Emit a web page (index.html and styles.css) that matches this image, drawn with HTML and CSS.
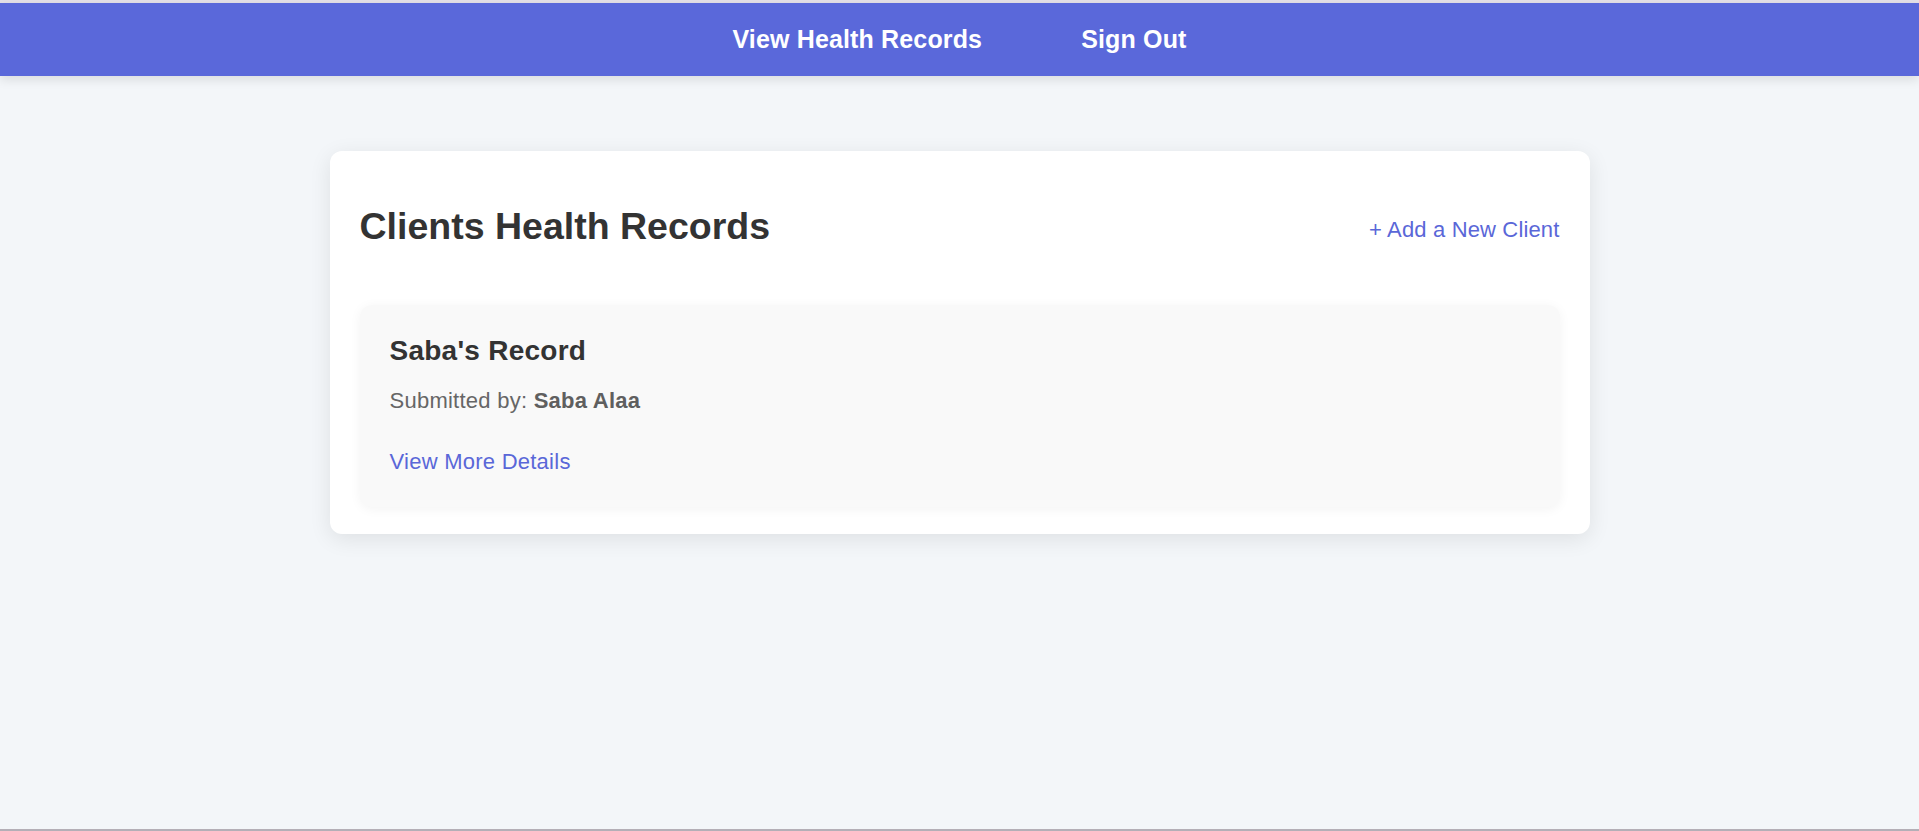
FILE: index.html
```html
<!DOCTYPE html>
<html lang="en">
<head>
<meta charset="utf-8">
<title>Clients Health Records</title>
<link rel="stylesheet" href="styles.css">
</head>
<body>
<div class="page">
  <div class="top-strip"></div>
  <nav class="navbar">
    <a class="nav-link" href="#">View Health Records</a>
    <a class="nav-link" href="#">Sign Out</a>
  </nav>
  <main class="main">
    <section class="card">
      <div class="card-header">
        <h2 class="card-title">Clients Health Records</h2>
        <a class="add-link" href="#">+ Add a New Client</a>
      </div>
      <article class="record">
        <h3 class="record-title">Saba's Record</h3>
        <p class="record-meta">Submitted by: <strong>Saba Alaa</strong></p>
        <a class="record-link" href="#">View More Details</a>
      </article>
    </section>
  </main>
  <div class="bottom-strip"></div>
</div>
</body>
</html>
```

FILE: styles.css
```css
* {
  box-sizing: border-box;
}

html, body {
  margin: 0;
  padding: 0;
  height: 100%;
}

body {
  font-family: "Liberation Sans", Arial, sans-serif;
  background: #f3f6f9;
  color: #333333;
}

.page {
  min-height: 100vh;
  display: flex;
  flex-direction: column;
}

.top-strip {
  height: 3px;
  background: #e4e0e7;
  flex: none;
}

.navbar {
  flex: none;
  height: 73px;
  background: #5a68da;
  display: flex;
  justify-content: center;
  align-items: center;
  gap: 99px;
  box-shadow: 0 4px 10px rgba(0, 0, 0, 0.1);
  position: relative;
  z-index: 1;
}

.nav-link {
  color: #ffffff;
  text-decoration: none;
  font-weight: bold;
  font-size: 25px;
  letter-spacing: 0.15px;
}

.main {
  flex: 1;
  display: flex;
  justify-content: center;
  align-items: flex-start;
  padding-top: 75px;
}

.card {
  width: 1260px;
  background: #ffffff;
  border-radius: 12px;
  padding: 30px 30px 27px;
  box-shadow: 0 5px 22px rgba(0, 0, 0, 0.09);
}

.card-header {
  display: flex;
  justify-content: space-between;
  align-items: center;
  margin-top: 24px;
  margin-bottom: 57px;
}

.card-title {
  margin: 0;
  font-size: 37.5px;
  font-weight: bold;
  color: #333333;
}

.add-link {
  margin-top: 6px;
  font-size: 22px;
  letter-spacing: 0.15px;
  color: #5a67d8;
  text-decoration: none;
}

.record {
  background: #f9f9f9;
  border-radius: 12px;
  padding: 30px 30px 32px;
  box-shadow: 0 2px 12px rgba(0, 0, 0, 0.05);
}

.record-title {
  margin: 0;
  font-size: 28px;
  font-weight: bold;
  letter-spacing: 0.25px;
  color: #333333;
}

.record-meta {
  margin: 21px 0 0;
  font-size: 22px;
  letter-spacing: 0.25px;
  color: #666666;
}

.record-meta strong {
  color: #5f5f5f;
}

.record-link {
  display: inline-block;
  margin-top: 35px;
  font-size: 22px;
  letter-spacing: 0.25px;
  color: #5a67d8;
  text-decoration: none;
}

.bottom-strip {
  flex: none;
  height: 2px;
  background: #b4afb7;
}
```
